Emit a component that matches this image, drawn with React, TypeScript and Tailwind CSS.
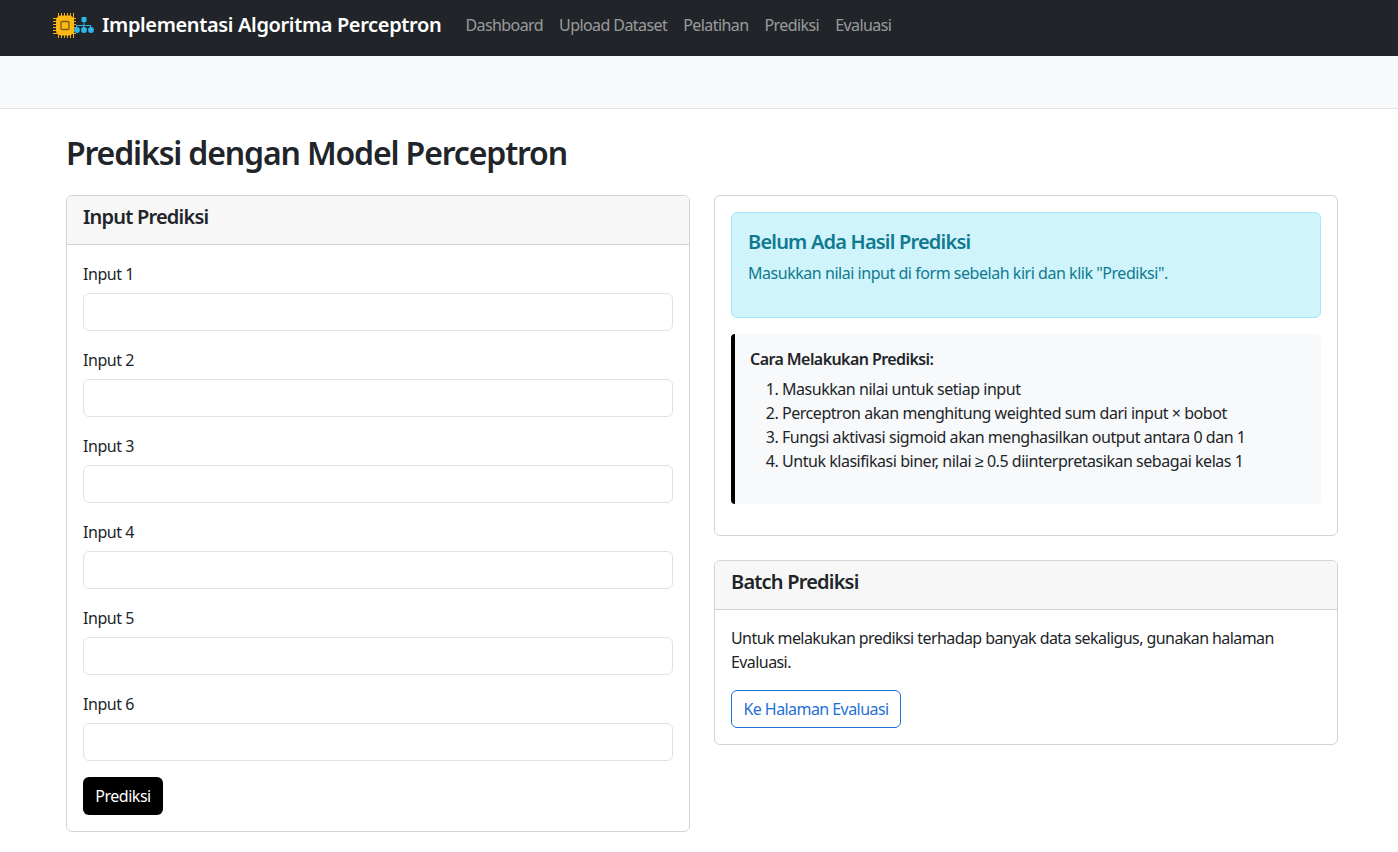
import React from 'react';

const inputs = ['Input 1', 'Input 2', 'Input 3', 'Input 4', 'Input 5', 'Input 6'];
const navLinks = ['Dashboard', 'Upload Dataset', 'Pelatihan', 'Prediksi', 'Evaluasi'];
const steps = [
  'Masukkan nilai untuk setiap input',
  'Perceptron akan menghitung weighted sum dari input × bobot',
  'Fungsi aktivasi sigmoid akan menghasilkan output antara 0 dan 1',
  'Untuk klasifikasi biner, nilai ≥ 0.5 diinterpretasikan sebagai kelas 1',
];

const Logo = () => (
  <svg width="42" height="28" viewBox="0 0 42 28" className="mt-[2px] shrink-0">
    {[6, 9, 12, 15, 18, 21].map((p) => (
      <g key={p} stroke="#f2b111" strokeWidth="1">
        <line x1={p + 0.5} y1="1" x2={p + 0.5} y2="26" />
        <line x1="1" y1={p + 0.5} x2="24" y2={p + 0.5} />
      </g>
    ))}
    <rect x="4" y="3.5" width="18" height="20" rx="5" fill="#fdb813" />
    <rect x="9" y="9.5" width="8" height="8" rx="1" fill="none" stroke="#7a5c12" strokeWidth="1.3" />
    <g fill="#2bb8e8">
      <rect x="29.5" y="5" width="5" height="5" rx="1" />
      <path d="M31.5 10h1v3h6.5v3h-1v-2h-6v2h-1v-2h-6v2h-1v-3h7.5z" />
      <circle cx="25" cy="18" r="2.9" />
      <circle cx="32" cy="18" r="2.9" />
      <circle cx="39" cy="18" r="2.9" />
    </g>
  </svg>
);

const Card = ({ title, children }: { title?: string; children: React.ReactNode }) => (
  <div className="rounded-[6px] border border-[#d3d4d5] bg-white">
    {title && (
      <div className="h-[49px] rounded-t-[5px] border-b border-[#d3d4d5] bg-[#f7f7f7] px-4 pt-[6px]">
        <h5 className="text-[20px] font-semibold leading-[30px] tracking-[-0.04em] text-[#212529]">{title}</h5>
      </div>
    )}
    <div className="p-4">{children}</div>
  </div>
);

export default function App() {
  return (
    <div className="min-h-[852px] bg-white text-[16px] leading-6 tracking-[-0.029em] text-[#212529] [font-family:'Noto_Sans',sans-serif]">
      <nav className="flex h-[56px] items-center bg-[#212529] pl-[52px] pb-[6px]">
        <Logo />
        <span className="ml-[8px] mr-[16px] text-[20px] font-semibold tracking-[-0.018em] text-white">
          Implementasi Algoritma Perceptron
        </span>
        <div className="flex">
          {navLinks.map((link) => (
            <a key={link} className="px-2 tracking-[-0.036em] text-[rgba(255,255,255,0.55)]">
              {link}
            </a>
          ))}
        </div>
      </nav>
      <div className="h-[53px] border-b border-[#dee2e6] bg-[#f8f9fa]" />

      <main className="pl-[66px] pr-[60px]">
        <h1 className="mt-[24px] mb-[22px] text-[32px] font-semibold leading-[40px] tracking-[-0.036em]">
          Prediksi dengan Model Perceptron
        </h1>
        <div className="grid grid-cols-2 gap-6">
          <Card title="Input Prediksi">
            <form className="flex flex-col">
              {inputs.map((label) => (
                <div key={label} className="mb-4">
                  <label className="mb-[7px] block pt-px">{label}</label>
                  <input
                    type="text"
                    className="block h-[38px] w-full rounded-[6px] border border-[#dee2e6] bg-white px-3"
                  />
                </div>
              ))}
              <button type="button" className="h-[38px] w-[80px] rounded-[6px] bg-black text-white">
                Prediksi
              </button>
            </form>
          </Card>

          <div className="flex flex-col gap-6 self-start">
            <Card>
              <div className="mb-4 h-[106px] rounded-[6px] border border-[#9eeaf9] bg-[#cff4fc] px-4 pt-[17px] text-[#0f7a8f]">
                <h5 className="mb-[7px] text-[20px] font-semibold leading-6 tracking-[-0.04em]">Belum Ada Hasil Prediksi</h5>
                <p>Masukkan nilai input di form sebelah kiri dan klik "Prediksi".</p>
              </div>
              <div className="mb-[15px] h-[170px] rounded-[4px] border-l-[4px] border-black bg-[#f8f9fa] pl-[15px] pr-4 pt-[13px]">
                <p className="mb-[6px] font-semibold tracking-[-0.036em]">Cara Melakukan Prediksi:</p>
                <ol className="list-decimal pl-8">
                  {steps.map((step) => (
                    <li key={step}>{step}</li>
                  ))}
                </ol>
              </div>
            </Card>
            <Card title="Batch Prediksi">
              <p className="mb-4 tracking-[-0.036em]">
                Untuk melakukan prediksi terhadap banyak data sekaligus, gunakan halaman Evaluasi.
              </p>
              <button type="button" className="h-[38px] w-[170px] rounded-[6px] border border-[#1f6fd8] tracking-[-0.035em] text-[#1f6fd8]">
                Ke Halaman Evaluasi
              </button>
            </Card>
          </div>
        </div>
      </main>
    </div>
  );
}
